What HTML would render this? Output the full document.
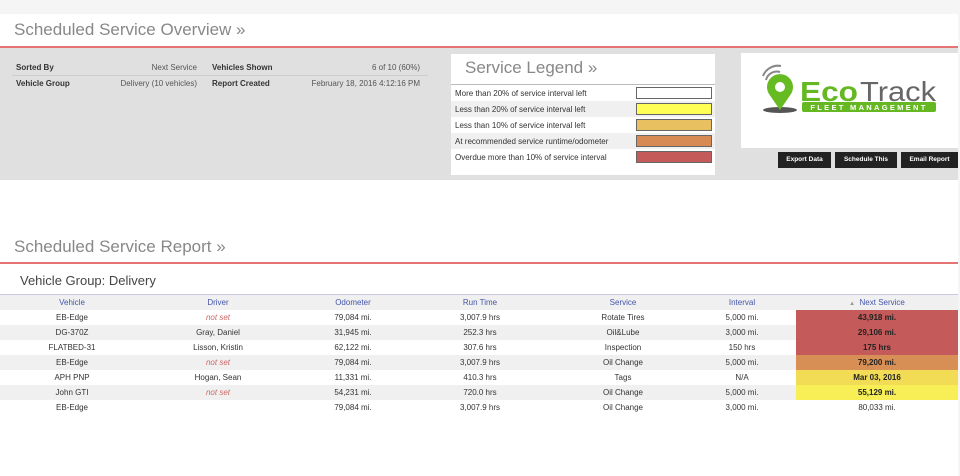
<!DOCTYPE html>
<html><head><meta charset="utf-8"><style>
*{margin:0;padding:0;box-sizing:border-box}
body{width:960px;height:476px;background:#f5f5f5;font-family:"Liberation Sans",sans-serif;position:relative;overflow:hidden;color:#333}
.abs{position:absolute}
.t{font-size:8px;white-space:nowrap}
.h{font-size:17px;color:#888}
.row{position:absolute;left:0;width:958px;height:15px}
.c{position:absolute;font-size:8px;text-align:center;line-height:15px;white-space:nowrap}
.ns{font-weight:bold;color:#222}
</style></head><body>
<div class="abs" style="left:0;top:14px;width:958px;height:462px;background:#fff"></div>
<div class="abs h" style="left:14px;top:20px">Scheduled Service Overview »</div>
<div class="abs" style="left:0;top:46px;width:958px;height:2px;background:#e57373"></div>
<div class="abs" style="left:0;top:48px;width:958px;height:132px;background:#e0e0e0"></div>
<div class="abs t" style="left:16px;top:63px;font-weight:bold">Sorted By</div>
<div class="abs t" style="left:100px;top:63px;width:97px;text-align:right;color:#555">Next Service</div>
<div class="abs t" style="left:212px;top:63px;font-weight:bold">Vehicles Shown</div>
<div class="abs t" style="left:300px;top:63px;width:120px;text-align:right;color:#555">6 of 10 (60%)</div>
<div class="abs" style="left:12px;top:75px;width:416px;height:1px;background:#ccc"></div>
<div class="abs t" style="left:16px;top:79px;font-weight:bold">Vehicle Group</div>
<div class="abs t" style="left:100px;top:79px;width:97px;text-align:right;color:#555">Delivery (10 vehicles)</div>
<div class="abs t" style="left:212px;top:79px;font-weight:bold">Report Created</div>
<div class="abs t" style="left:290px;top:79px;width:130px;text-align:right;color:#555">February 18, 2016 4:12:16 PM</div>

<div class="abs" style="left:451px;top:54px;width:264px;height:121px;background:#fff"></div>
<div class="abs h" style="left:465px;top:58px;font-size:17px">Service Legend »</div>
<div class="abs" style="left:451px;top:84px;width:264px;height:1px;background:#bbb"></div>
<div class="abs" style="left:451px;top:101px;width:264px;height:16px;background:#f0f0f0"></div>
<div class="abs" style="left:451px;top:133px;width:264px;height:16px;background:#f0f0f0"></div>
<div class="abs t" style="left:455px;top:89px">More than 20% of service interval left</div>
<div class="abs t" style="left:455px;top:105px">Less than 20% of service interval left</div>
<div class="abs t" style="left:455px;top:121px">Less than 10% of service interval left</div>
<div class="abs t" style="left:455px;top:137px">At recommended service runtime/odometer</div>
<div class="abs t" style="left:455px;top:153px">Overdue more than 10% of service interval</div>
<div class="abs" style="left:636px;top:87px;width:76px;height:12px;background:#fff;border:1px solid #666"></div>
<div class="abs" style="left:636px;top:103px;width:76px;height:12px;background:#ffff55;border:1px solid #666"></div>
<div class="abs" style="left:636px;top:119px;width:76px;height:12px;background:#e8c060;border:1px solid #666"></div>
<div class="abs" style="left:636px;top:135px;width:76px;height:12px;background:#d88a55;border:1px solid #666"></div>
<div class="abs" style="left:636px;top:151px;width:76px;height:12px;background:#c55a5a;border:1px solid #666"></div>

<div class="abs" style="left:741px;top:53px;width:217px;height:95px;background:#fff"></div>
<svg class="abs" style="left:755px;top:60px" width="190" height="60" viewBox="0 0 190 60">
<path d="M8 16a16 16 0 0 1 18-10M11 20a11 11 0 0 1 14-8M14 24a6 6 0 0 1 9-5" stroke="#888" stroke-width="2" fill="none"/>
<ellipse cx="25" cy="50" rx="17" ry="3" fill="#555"/>
<path d="M25 50L14 34a13 13 0 1 1 22 0z" fill="#66bb22"/>
<circle cx="25" cy="27" r="5" fill="#fff"/>
<text x="45" y="41" font-family="Liberation Sans" font-weight="bold" font-size="28" fill="#66b822" textLength="58" lengthAdjust="spacingAndGlyphs">Eco</text>
<text x="105" y="41" font-family="Liberation Sans" font-size="28" fill="#666" textLength="76" lengthAdjust="spacingAndGlyphs">Track</text>
<rect x="47" y="42" width="134" height="10" rx="2" fill="#66b822"/>
<text x="114" y="50" text-anchor="middle" font-family="Liberation Sans" font-weight="bold" font-size="7.5" letter-spacing="2.3" fill="#fff">FLEET MANAGEMENT</text>
</svg>
<div class="abs t" style="left:778px;top:152px;width:53px;height:16px;background:#222;color:#fff;font-size:6.5px;font-weight:bold;text-align:center;line-height:16px">Export Data</div>
<div class="abs t" style="left:835px;top:152px;width:62px;height:16px;background:#222;color:#fff;font-size:6.5px;font-weight:bold;text-align:center;line-height:16px">Schedule This</div>
<div class="abs t" style="left:901px;top:152px;width:57px;height:16px;background:#222;color:#fff;font-size:6.5px;font-weight:bold;text-align:center;line-height:16px">Email Report</div>

<div class="abs h" style="left:14px;top:237px">Scheduled Service Report »</div>
<div class="abs" style="left:0;top:262px;width:958px;height:2px;background:#e57373"></div>
<div class="abs" style="left:20px;top:273px;font-size:13px;color:#444">Vehicle Group: Delivery</div>
<div class="abs" style="left:0;top:294px;width:958px;height:1px;background:#c8c8e0"></div>
<div class="row" style="top:295px;background:#f0f0f0;color:#4455aa">
<div class="c" style="left:22px;width:100px;color:#4455aa">Vehicle</div>
<div class="c" style="left:168px;width:100px;color:#4455aa">Driver</div>
<div class="c" style="left:303px;width:100px;color:#4455aa">Odometer</div>
<div class="c" style="left:430px;width:100px;color:#4455aa">Run Time</div>
<div class="c" style="left:573px;width:100px;color:#4455aa">Service</div>
<div class="c" style="left:692px;width:100px;color:#4455aa">Interval</div>
<div class="c" style="left:796px;width:162px;color:#4455aa"><span style="color:#999;font-size:6px">▲</span>&nbsp; Next Service</div>
</div>

<div class="row" style="top:310px;background:#fff"><div class="c" style="left:22px;width:100px">EB-Edge</div><div class="c" style="left:168px;width:100px;color:#c66;font-style:italic">not set</div><div class="c" style="left:303px;width:100px">79,084 mi.</div><div class="c" style="left:430px;width:100px">3,007.9 hrs</div><div class="c" style="left:573px;width:100px">Rotate Tires</div><div class="c" style="left:692px;width:100px">5,000 mi.</div><div class="c ns" style="left:796px;width:162px;background:#c55a5a">43,918 mi.</div></div>
<div class="row" style="top:325px;background:#f0f0f0"><div class="c" style="left:22px;width:100px">DG-370Z</div><div class="c" style="left:168px;width:100px">Gray, Daniel</div><div class="c" style="left:303px;width:100px">31,945 mi.</div><div class="c" style="left:430px;width:100px">252.3 hrs</div><div class="c" style="left:573px;width:100px">Oil&amp;Lube</div><div class="c" style="left:692px;width:100px">3,000 mi.</div><div class="c ns" style="left:796px;width:162px;background:#c55a5a">29,106 mi.</div></div>
<div class="row" style="top:340px;background:#fff"><div class="c" style="left:22px;width:100px">FLATBED-31</div><div class="c" style="left:168px;width:100px">Lisson, Kristin</div><div class="c" style="left:303px;width:100px">62,122 mi.</div><div class="c" style="left:430px;width:100px">307.6 hrs</div><div class="c" style="left:573px;width:100px">Inspection</div><div class="c" style="left:692px;width:100px">150 hrs</div><div class="c ns" style="left:796px;width:162px;background:#c55a5a">175 hrs</div></div>
<div class="row" style="top:355px;background:#f0f0f0"><div class="c" style="left:22px;width:100px">EB-Edge</div><div class="c" style="left:168px;width:100px;color:#c66;font-style:italic">not set</div><div class="c" style="left:303px;width:100px">79,084 mi.</div><div class="c" style="left:430px;width:100px">3,007.9 hrs</div><div class="c" style="left:573px;width:100px">Oil Change</div><div class="c" style="left:692px;width:100px">5,000 mi.</div><div class="c ns" style="left:796px;width:162px;background:#d88f55">79,200 mi.</div></div>
<div class="row" style="top:370px;background:#fff"><div class="c" style="left:22px;width:100px">APH PNP</div><div class="c" style="left:168px;width:100px">Hogan, Sean</div><div class="c" style="left:303px;width:100px">11,331 mi.</div><div class="c" style="left:430px;width:100px">410.3 hrs</div><div class="c" style="left:573px;width:100px">Tags</div><div class="c" style="left:692px;width:100px">N/A</div><div class="c ns" style="left:796px;width:162px;background:#f2dc55">Mar 03, 2016</div></div>
<div class="row" style="top:385px;background:#f0f0f0"><div class="c" style="left:22px;width:100px">John GTI</div><div class="c" style="left:168px;width:100px;color:#c66;font-style:italic">not set</div><div class="c" style="left:303px;width:100px">54,231 mi.</div><div class="c" style="left:430px;width:100px">720.0 hrs</div><div class="c" style="left:573px;width:100px">Oil Change</div><div class="c" style="left:692px;width:100px">5,000 mi.</div><div class="c ns" style="left:796px;width:162px;background:#f7ef55">55,129 mi.</div></div>
<div class="row" style="top:400px;background:#fff"><div class="c" style="left:22px;width:100px">EB-Edge</div><div class="c" style="left:303px;width:100px">79,084 mi.</div><div class="c" style="left:430px;width:100px">3,007.9 hrs</div><div class="c" style="left:573px;width:100px">Oil Change</div><div class="c" style="left:692px;width:100px">3,000 mi.</div><div class="c" style="left:796px;width:162px">80,033 mi.</div></div>
</body></html>
